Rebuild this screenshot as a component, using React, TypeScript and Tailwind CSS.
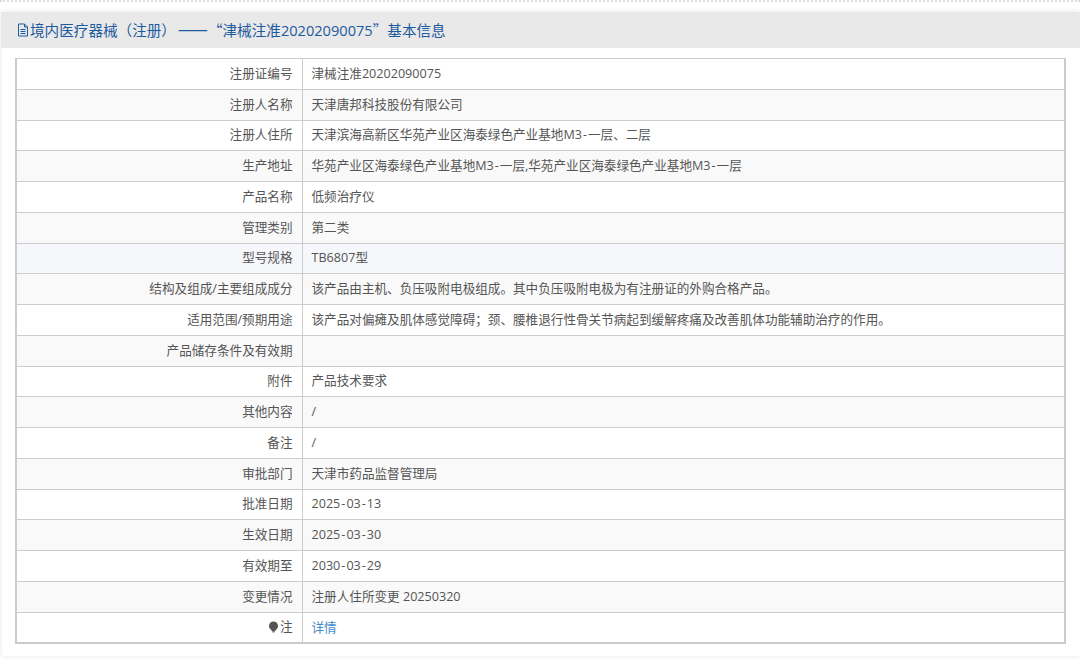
const rows: [string, string][] = [
  ['注册证编号', '津械注准20202090075'],
  ['注册人名称', '天津唐邦科技股份有限公司'],
  ['注册人住所', '天津滨海高新区华苑产业区海泰绿色产业基地M3-一层、二层'],
  ['生产地址', '华苑产业区海泰绿色产业基地M3-一层,华苑产业区海泰绿色产业基地M3-一层'],
  ['产品名称', '低频治疗仪'],
  ['管理类别', '第二类'],
  ['型号规格', 'TB6807型'],
  ['结构及组成/主要组成成分', '该产品由主机、负压吸附电极组成。其中负压吸附电极为有注册证的外购合格产品。'],
  ['适用范围/预期用途', '该产品对偏瘫及肌体感觉障碍；颈、腰椎退行性骨关节病起到缓解疼痛及改善肌体功能辅助治疗的作用。'],
  ['产品储存条件及有效期', ''],
  ['附件', '产品技术要求'],
  ['其他内容', '/'],
  ['备注', '/'],
  ['审批部门', '天津市药品监督管理局'],
  ['批准日期', '2025-03-13'],
  ['生效日期', '2025-03-30'],
  ['有效期至', '2030-03-29'],
  ['变更情况', '注册人住所变更 20250320'],
]

function rowBg(i: number) {
  if (i === 6) return 'bg-[#f5f7fa]'
  return i % 2 === 1 ? 'bg-[#f9f9f9]' : 'bg-white'
}

// hyphens sit wider in the original
function Value({ text }: { text: string }) {
  return (
    <>
      {text.split('-').map((part, i) => (
        <span key={i}>
          {i > 0 && <span className="px-px">-</span>}
          {part}
        </span>
      ))}
    </>
  )
}

export default function App() {
  return (
    <div className="h-[659px] overflow-hidden bg-white font-['Open_Sans','Noto_Sans_CJK_SC',sans-serif] text-[12.6px] text-[#555]">
      <div className="h-[3px] border-t-2 border-dotted border-[#ddd]" />
      <div className="ml-[2px] mt-[9px] h-[644px] bg-white shadow-[0_0_6px_rgba(0,0,0,0.1)]">
        <div className="-ml-px flex h-[36px] items-center bg-[#e9e9e9] pl-[15px] text-[14.6px] text-[#1e5a9e]">
          <svg width="14" height="14" viewBox="0 0 14 14" fill="none" stroke="#1e5a9e" strokeWidth="1">
            <path d="M2.5 1h6l3 3v9h-9zM8.5 1v3h3M4.5 6.5h5M4.5 8.5h5M4.5 10.5h5" />
          </svg>
          <span>
            境内医疗器械（注册） <span className="-ml-[2px] text-[18px] leading-none font-['Noto_Sans_CJK_SC',sans-serif]">——</span>
            <span className="font-['Noto_Sans_CJK_SC',sans-serif]">“</span>津械注准20202090075
            <span className="font-['Noto_Sans_CJK_SC',sans-serif]">”</span>基本信息
          </span>
        </div>
        <div className="mt-[10px] pl-[13px]">
          <table className="w-[1051px] table-fixed border-collapse border-2 border-t border-[#ccc]">
            <tbody>
              {rows.map(([label, value], i) => (
                <tr key={label} className={`h-[30.75px] ${rowBg(i)}`}>
                  <td className="w-[286px] border border-[#ccc] pr-[9px] pt-px text-right">{label}</td>
                  <td className="border border-[#ccc] pl-[9px] pt-px">
                    <Value text={value} />
                  </td>
                </tr>
              ))}
              <tr className="h-[30.75px] bg-white">
                <td className="border border-[#ccc] pr-[9px] pt-[3px] text-right">
                  <span className="inline-flex items-center justify-end">
                    <svg className="mr-px" width="11" height="12" viewBox="0 0 11 12" fill="#555">
                      <path d="M5.5 0.5a4.5 4.5 0 0 1 2.2 8.4l-.5 1h-3.4l-.5-1A4.5 4.5 0 0 1 5.5.5zM4.2 10.3h2.6v.7l-.7.6H4.9l-.7-.6z" />
                    </svg>
                    注
                  </span>
                </td>
                <td className="border border-[#ccc] pl-[9px] pt-[2px] text-[#428bca]">详情</td>
              </tr>
            </tbody>
          </table>
        </div>
      </div>
    </div>
  )
}
